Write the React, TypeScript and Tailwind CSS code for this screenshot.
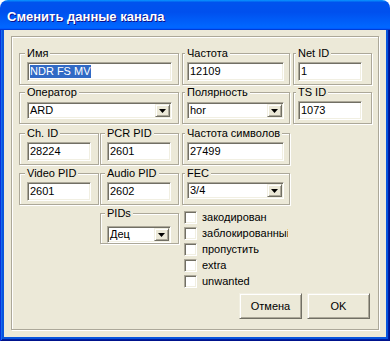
import React from "react"

const sunken =
  "border border-t-[#ACA899] border-l-[#ACA899] border-b-white border-r-white shadow-[inset_1px_1px_0_#716F64,inset_-1px_-1px_0_#F1EFE2]"
const raised =
  "border border-t-[#F1EFE2] border-l-[#F1EFE2] border-b-[#716F64] border-r-[#716F64] shadow-[inset_1px_1px_0_#fff,inset_-1px_-1px_0_#ACA899]"

function Group({
  label,
  className,
  labelClass,
  children,
}: {
  label: string
  className: string
  labelClass: string
  children: React.ReactNode
}) {
  return (
    <div className={`relative shrink-0 border border-[#ACA899] shadow-[1px_1px_0_#fff,inset_1px_1px_0_#fff] ${className}`}>
      <span className={`absolute -top-[7px] bg-[#ECE9D8] px-[2px] leading-[13px] ${labelClass}`}>{label}</span>
      {children}
    </div>
  )
}

function Input({ value, w, selected }: { value: string; w: string; selected?: boolean }) {
  return (
    <div className={`${w} ${sunken} flex h-[19px] items-center bg-white px-[1px]`}>
      {selected ? (
        <span className="ml-[1px] bg-[#316AC5] leading-[13px] text-white">{value}</span>
      ) : (
        <span className="ml-[1px] leading-[13px]">{value}</span>
      )}
    </div>
  )
}

function Combo({ value, w }: { value: string; w: string }) {
  return (
    <div className={`${w} ${sunken} flex h-[17px] items-center bg-white p-[1px]`}>
      <span className="flex-1 pl-[1px] leading-[13px]">{value}</span>
      <span className={`${raised} flex h-[13px] w-[15px] items-center justify-center bg-[#ECE9D8]`}>
        <svg width="7" height="4" viewBox="0 0 7 4">
          <path d="M0 0h7L3.5 4z" fill="#000" />
        </svg>
      </span>
    </div>
  )
}

function Check({ label }: { label: string }) {
  return (
    <div className="flex h-[13px] items-center gap-[5px]">
      <span className={`${sunken} h-[13px] w-[13px] bg-white`} />
      <span className="w-[86px] overflow-hidden whitespace-nowrap leading-[13px]">{label}</span>
    </div>
  )
}

function Button({ children }: { children: React.ReactNode }) {
  return (
    <button className={`${raised} flex h-[26px] w-[63px] items-center justify-center bg-[#ECE9D8] pt-[1px]`}>
      {children}
    </button>
  )
}

export default function App() {
  return (
    <div className="h-[341px] w-[390px] bg-white font-['Liberation_Sans',Arial,sans-serif] text-[11px] text-black">
      <div className="flex h-full flex-col overflow-hidden rounded-t-[8px]">
        {/* Title bar */}
        <div className="flex h-[30px] shrink-0 items-center bg-[linear-gradient(180deg,#0997ff,#0053ee_8%,#0050ee_40%,#0066ff_88%,#0066ff_93%,#005bff_95%,#003dd7_96%,#003dd7)] pl-[7px] pt-[3px]">
          <span className="text-[13px] font-bold text-white [text-shadow:1px_1px_#0f1089]">
            Сменить данные канала
          </span>
        </div>

        {/* Frame + client */}
        <div className="flex flex-1 flex-col bg-[#0855DD] px-[4px] pb-[4px] shadow-[inset_1px_0_0_#0831D9,inset_-1px_0_0_#00138C,inset_0_-1px_0_#00138C,inset_2px_0_0_#166AEE,inset_-2px_0_0_#001EA0,inset_0_-2px_0_#001EA0]">
          <div className="flex flex-1 flex-col bg-[#ECE9D8] px-[7px] pb-[7px] pt-[6px]">
            {/* Panel */}
            <div className="flex h-[294px] flex-col border border-[#ACA899] pl-[7px] pt-[16px] shadow-[1px_1px_0_#fff,inset_1px_1px_0_#fff]">
              {/* Row 1 */}
              <div className="flex">
                <Group label="Имя" className="h-[32px] w-[160px] pl-[7px] pt-[8px]" labelClass="left-[5px]">
                  <Input value="NDR FS MV" w="w-[145px]" selected />
                </Group>
                <Group label="Частота" className="ml-[3px] h-[32px] w-[108px] pl-[4px] pt-[8px]" labelClass="left-[2px]">
                  <Input value="12109" w="w-[97px]" />
                </Group>
                <Group label="Net ID" className="ml-[3px] h-[32px] w-[79px] pl-[4px] pt-[8px]" labelClass="left-[2px]">
                  <Input value="1" w="w-[64px]" />
                </Group>
              </div>

              {/* Row 2 */}
              <div className="mt-[7px] flex">
                <Group label="Оператор" className="h-[32px] w-[160px] pl-[7px] pt-[9px]" labelClass="left-[5px]">
                  <Combo value="ARD" w="w-[145px]" />
                </Group>
                <Group label="Полярность" className="ml-[3px] h-[32px] w-[108px] pl-[4px] pt-[9px]" labelClass="left-[2px]">
                  <Combo value="hor" w="w-[97px]" />
                </Group>
                <Group label="TS ID" className="ml-[3px] h-[32px] w-[79px] pl-[4px] pt-[8px]" labelClass="left-[2px]">
                  <Input value="1073" w="w-[64px]" />
                </Group>
              </div>

              {/* Row 3 */}
              <div className="mt-[9px] flex">
                <Group label="Ch. ID" className="h-[32px] w-[80px] pl-[7px] pt-[8px]" labelClass="left-[5px]">
                  <Input value="28224" w="w-[64px]" />
                </Group>
                <Group label="PCR PID" className="ml-[1px] h-[32px] w-[79px] pl-[6px] pt-[8px]" labelClass="left-[4px]">
                  <Input value="2601" w="w-[64px]" />
                </Group>
                <Group label="Частота символов" className="ml-[3px] h-[32px] w-[108px] pl-[4px] pt-[8px]" labelClass="left-[2px]">
                  <Input value="27499" w="w-[97px]" />
                </Group>
              </div>

              {/* Row 4 */}
              <div className="mt-[8px] flex">
                <Group label="Video PID" className="h-[32px] w-[80px] pl-[7px] pt-[8px]" labelClass="left-[5px]">
                  <Input value="2601" w="w-[64px]" />
                </Group>
                <Group label="Audio PID" className="ml-[1px] h-[32px] w-[79px] pl-[6px] pt-[8px]" labelClass="left-[4px]">
                  <Input value="2602" w="w-[64px]" />
                </Group>
                <Group label="FEC" className="ml-[3px] h-[32px] w-[108px] pl-[4px] pt-[8px]" labelClass="left-[2px]">
                  <Combo value="3/4" w="w-[97px]" />
                </Group>
              </div>

              {/* Row 5 */}
              <div className="mt-[8px] flex items-start">
                <Group label="PIDs" className="ml-[81px] h-[31px] w-[79px] pl-[6px] pt-[12px]" labelClass="left-[4px]">
                  <Combo value="Дец" w="w-[64px]" />
                </Group>
                <div className="-mt-[2px] ml-[5px] flex flex-col gap-[3px]">
                  <Check label="закодирован" />
                  <Check label="заблокированный" />
                  <Check label="пропустить" />
                  <Check label="extra" />
                  <Check label="unwanted" />
                </div>
              </div>

              {/* Buttons */}
              <div className="mt-auto flex justify-end gap-[5px] pb-[10px] pr-[8px]">
                <Button>Отмена</Button>
                <Button>OK</Button>
              </div>
            </div>
          </div>
        </div>
      </div>
    </div>
  )
}
